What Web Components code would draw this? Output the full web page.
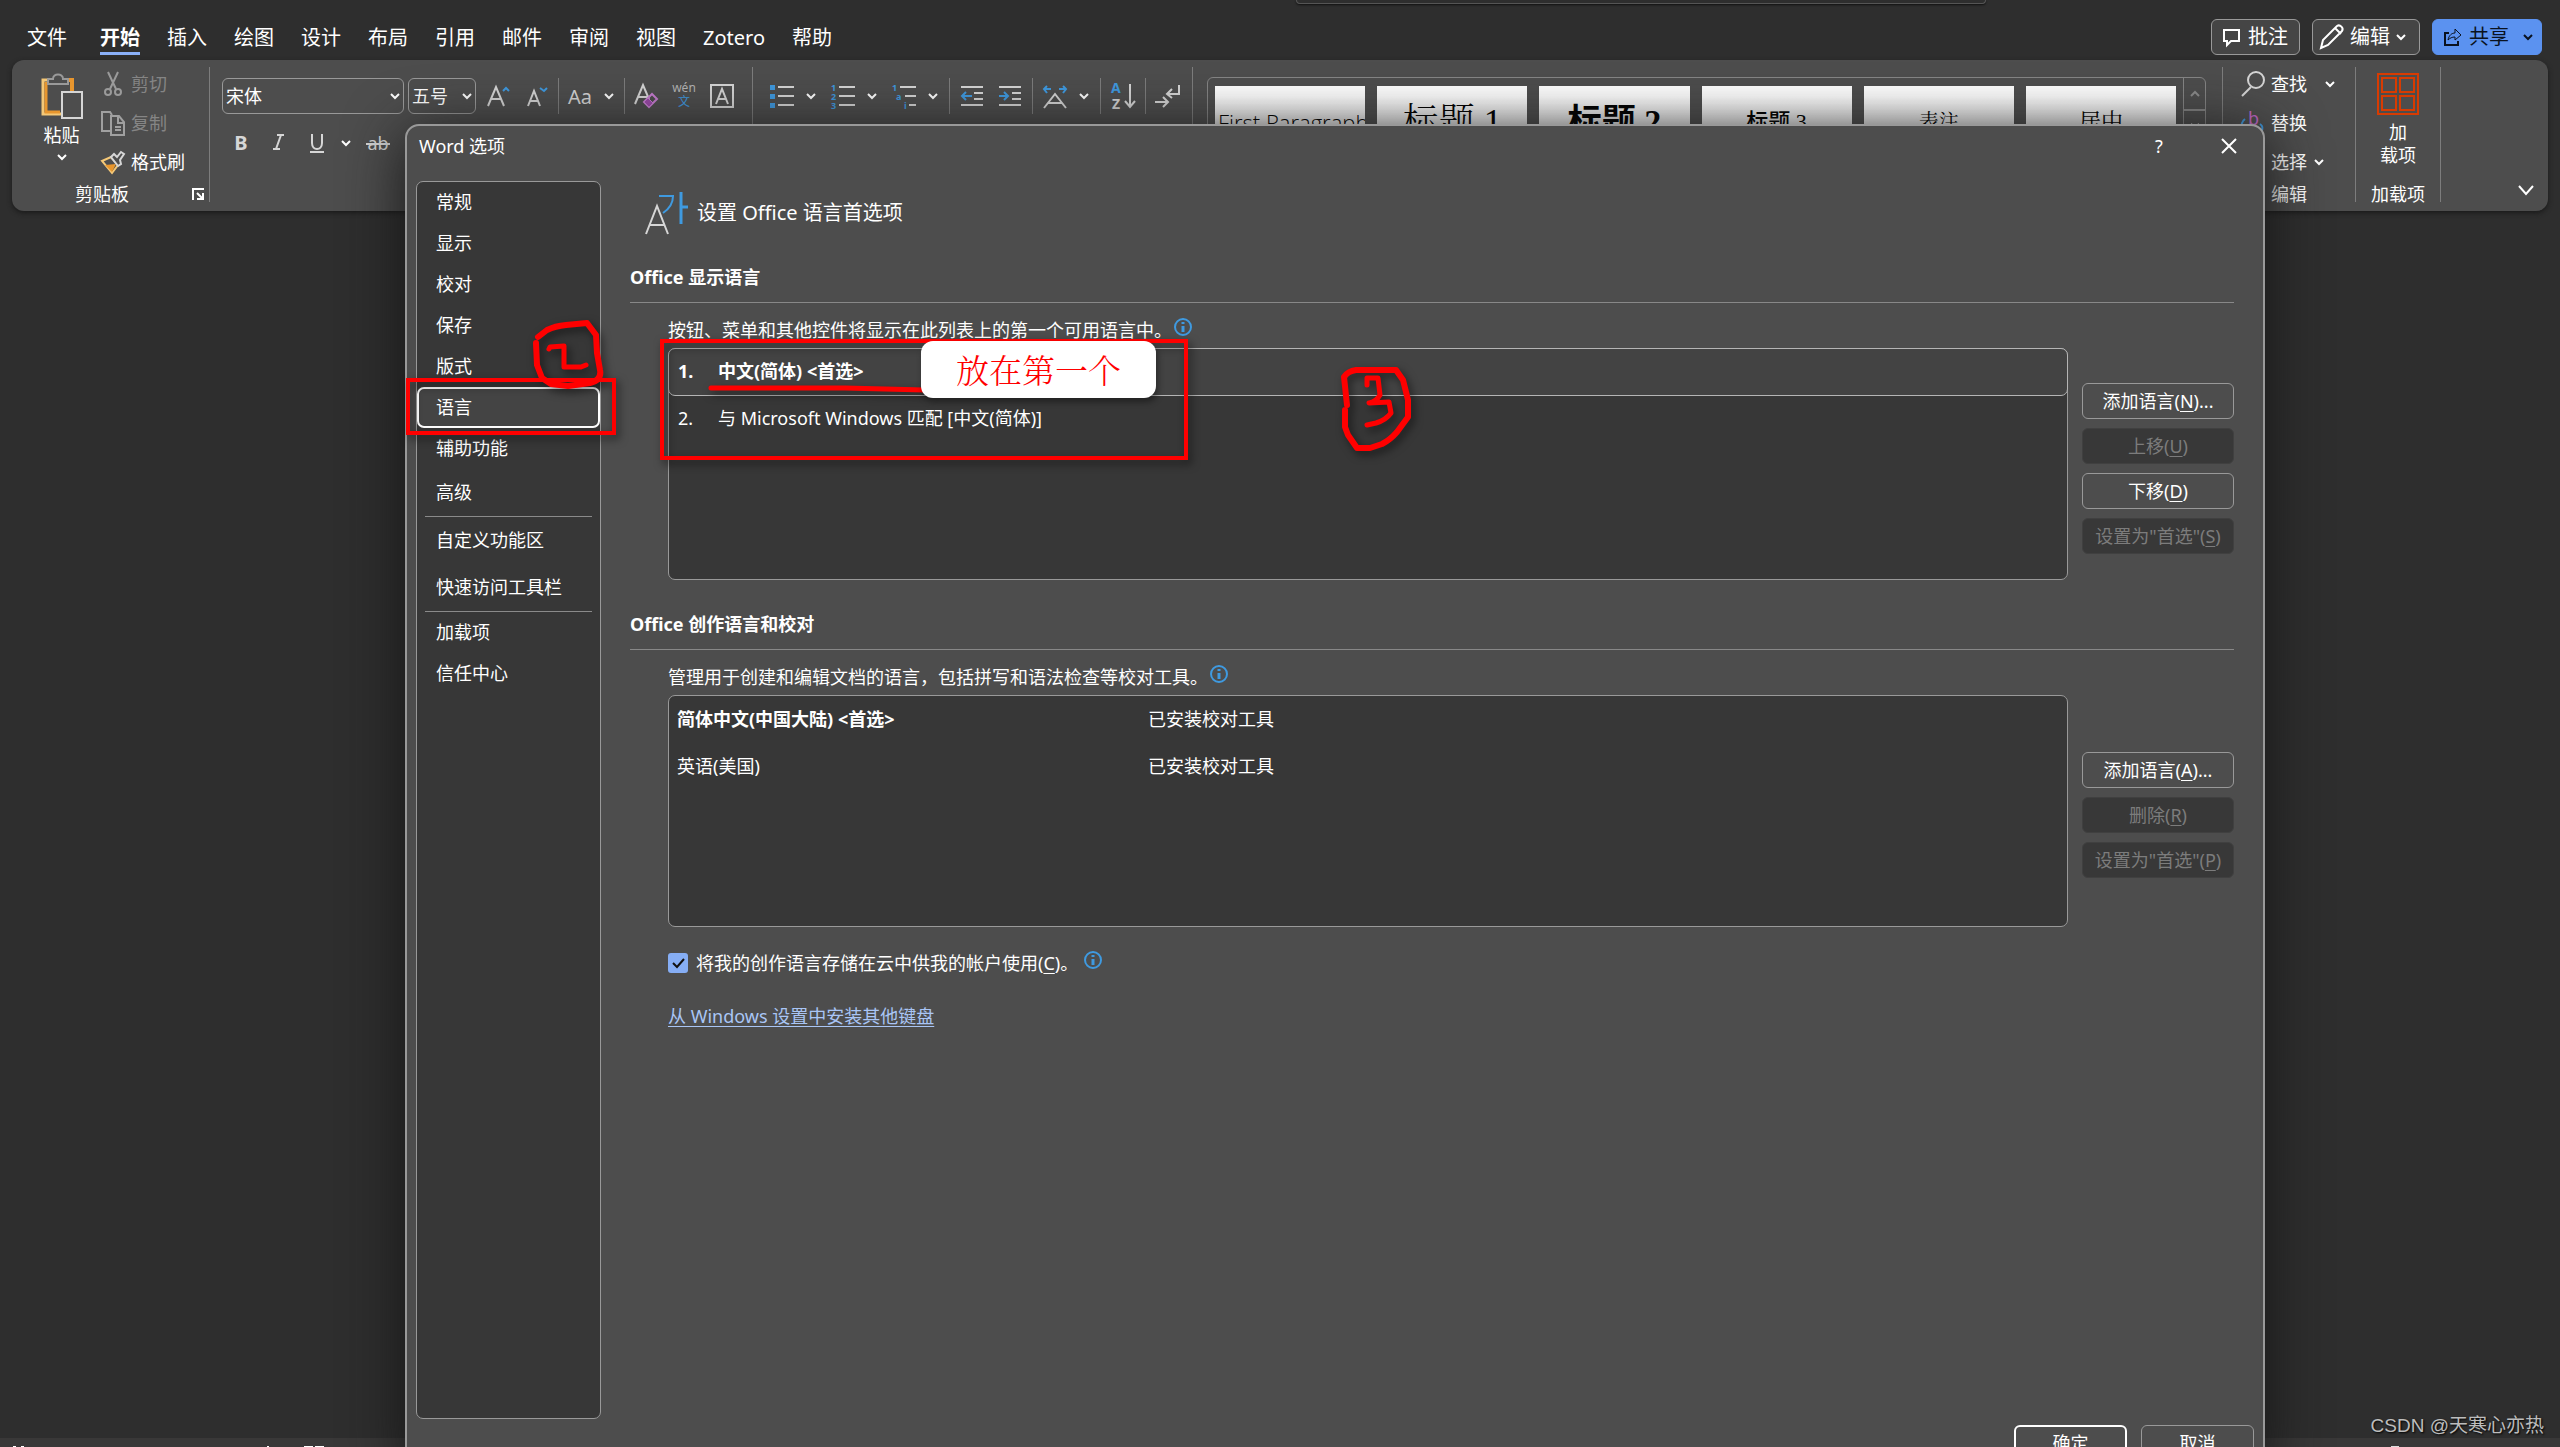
<!DOCTYPE html>
<html lang="zh-CN">
<head>
<meta charset="utf-8">
<title>Word 选项</title>
<style>
html,body{margin:0;height:100%;overflow:hidden;background:#2e2e2e}
body{font-family:"Noto Sans","Noto Sans CJK SC",sans-serif;font-size:18px;line-height:24px;color:#fff}
</style>
</head>
<body>
<word-app></word-app>
<script>
const BASE = `*{box-sizing:border-box}button,select,input{font:inherit;color:inherit;background:none;border:0;margin:0;padding:0}button{cursor:pointer}u{text-underline-offset:3px}`;
function define(tag, html, setup) {
  const t = document.createElement('template');
  t.innerHTML = html;
  customElements.define(tag, class extends HTMLElement {
    constructor() {
      super();
      this.attachShadow({mode: 'open'}).appendChild(t.content.cloneNode(true));
    }
    connectedCallback() { if (setup) setup(this, this.shadowRoot); }
  });
}

/* icon set: [width, height, markup] */
const W = '#d6d6d6', B = '#3f9ae0';
const chev = (c, s) => `<path d="M2 2l4 4 4-4" fill="none" stroke="${c}" stroke-width="${s}"/>`;
const ICONS = {
  chev: [12, 8, chev('#fff', 2)],
  chevDark: [12, 8, chev('#0a1220', 2)],
  chevDim: [12, 8, '<path d="M2 6l4-4 4 4" fill="none" stroke="#8b8b8b" stroke-width="2"/>'],
  chevBig: [18, 12, '<path d="M2 2l7 8 7-8" fill="none" stroke="#fff" stroke-width="2"/>'],
  paste: [42, 46, `<path d="M6 7H2v34h18" fill="none" stroke="#f5c877" stroke-width="3"/><path d="M5 9v30h14" fill="none" stroke="#e8962e" stroke-width="3"/><path d="M25 7h6v11" fill="none" stroke="#e8962e" stroke-width="4"/><path d="M7 11V6h5c0-6 10-6 10 0h5v5z" fill="#4d4d4d" stroke="#9a9a9a" stroke-width="2"/><rect x="21" y="19" width="20" height="26" fill="#4d4d4d" stroke="#d6d6d6" stroke-width="2"/>`],
  cut: [24, 26, `<g fill="none" stroke="#9a9a9a" stroke-width="2"><path d="M7 1l8 17M17 1L9 18"/><circle cx="7" cy="21" r="3"/><circle cx="17" cy="21" r="3"/></g>`],
  copy: [24, 26, `<g fill="none" stroke="#a0a0a0" stroke-width="2"><path d="M9 21H1V2h8l2 3"/><path d="M10 6h8l5 6v13H10z" fill="#4d4d4d"/><path d="M17 7v6h6M14 17h6M14 20h6"/></g>`],
  brush: [24, 24, `<path d="M1 11l9-4 7 8-6 8z" fill="#4d4d4d" stroke="#f5c877" stroke-width="2"/><path d="M4 15l11-1-4 8z" fill="#e8962e"/><path d="M10 7l3-3 3 3 4-5 3 2-4 6 1 4-3 2z" fill="#4d4d4d" stroke="${W}" stroke-width="2"/>`],
  launcher: [12, 12, `<path d="M1 12V1h11M5 5l6 6M11 5v6H5" fill="none" stroke="#fff" stroke-width="2"/>`],
  grow: [24, 24, `<path d="M1 22L9 3l8 19M4 15h10" fill="none" stroke="${W}" stroke-width="2"/><path d="M16 7l3-3 3 3" fill="none" stroke="${B}" stroke-width="2"/>`],
  shrink: [24, 24, `<path d="M3 22L9 7l6 15M5 17h8" fill="none" stroke="${W}" stroke-width="2"/><path d="M15 4l4 3 3-3" fill="none" stroke="${B}" stroke-width="2"/>`],
  aa: [24, 24, `<text x="0" y="20" font-size="20" fill="${W}">Aa</text>`],
  clear: [24, 26, `<path d="M1 21L9 2l6 14M4 14h9" fill="none" stroke="${W}" stroke-width="2"/><path d="M10 19l8-8 5 5-8 8z" fill="none" stroke="#c77dd1" stroke-width="2"/><path d="M10 19l4-4 5 5-4 4z" fill="#9b4aa8" stroke="#c77dd1"/>`],
  pinyin: [24, 26, `<text x="12" y="9" text-anchor="middle" font-size="12" fill="#b4b4b4">wén</text><text x="12" y="23" text-anchor="middle" font-size="12" fill="${B}">文</text>`],
  boxA: [24, 26, `<rect x="1" y="2" width="22" height="22" fill="none" stroke="${W}" stroke-width="2"/><path d="M6 21l6-15 6 15M8 16h8" fill="none" stroke="${W}" stroke-width="2"/>`],
  bullets: [24, 26, `<path d="M0 2h5v5H0zM0 11h5v5H0zM0 20h5v5H0z" fill="${B}"/><path d="M8 4h16M8 13h16M8 22h16" stroke="${W}" stroke-width="2"/>`],
  numbers: [24, 26, `<g font-size="9" font-weight="700" fill="${B}"><text x="0" y="8">1</text><text x="0" y="17">2</text><text x="0" y="26">3</text></g><path d="M8 4h16M8 13h16M8 22h16" stroke="${W}" stroke-width="2"/>`],
  multi: [24, 26, `<g font-size="9" font-weight="700" fill="${B}"><text x="0" y="8">1</text><text x="4" y="17">a</text><text x="12" y="26">i</text></g><path d="M8 4h16M13 13h11M17 22h7" stroke="${W}" stroke-width="2"/>`],
  outdent: [24, 26, `<path d="M1 4h22M14 10h9M14 16h9M1 22h22" stroke="${W}" stroke-width="2"/><path d="M12 13H3M6 9l-4 4 4 4" fill="none" stroke="${B}" stroke-width="2"/>`],
  indent: [24, 26, `<path d="M1 4h22M14 10h9M14 16h9M1 22h22" stroke="${W}" stroke-width="2"/><path d="M1 13h9M6 9l4 4-4 4" fill="none" stroke="${B}" stroke-width="2"/>`],
  cjkWidth: [24, 26, `<path d="M1 25l11-14 11 14M5 20h14" fill="none" stroke="${W}" stroke-width="2"/><path d="M8 6H1M4 3L1 6l3 4M16 6h7M20 3l3 3-3 4" fill="none" stroke="${B}" stroke-width="2"/>`],
  sort: [24, 28, `<text x="0" y="11" font-size="14" font-weight="700" fill="${B}">A</text><text x="1" y="27" font-size="14" font-weight="700" fill="${W}">Z</text><path d="M19 2v22M14 19l5 6 5-6" fill="none" stroke="${W}" stroke-width="2"/>`],
  marks: [26, 26, `<path d="M24 2v9H13M17 6l-5 5 5 4M0 19h12M8 14l5 5-5 5" fill="none" stroke="${W}" stroke-width="2"/>`],
  bold: [24, 26, `<text x="12" y="20" text-anchor="middle" font-size="20" font-weight="700" fill="${W}">B</text>`],
  italic: [24, 26, `<path d="M10 5h7M6 19h7M14 5l-5 14" fill="none" stroke="${W}" stroke-width="2"/>`],
  under: [24, 26, `<path d="M7 4v9c0 8 10 8 10 0V4M5 22h14" fill="none" stroke="${W}" stroke-width="2"/>`],
  strike: [24, 26, `<text x="12" y="20" text-anchor="middle" font-size="18" fill="${W}">ab</text><path d="M0 14h24" stroke="${W}" stroke-width="2"/>`],
  find: [24, 26, `<ellipse cx="15" cy="9" rx="8" ry="8" fill="none" stroke="${W}" stroke-width="2"/><path d="M10 16l-9 9" stroke="${W}" stroke-width="2"/>`],
  replace: [24, 26, `<text x="7" y="15" font-size="18" fill="#c468c9">b</text><path d="M4 9c-3 2-4 6-3 11M19 14c3 2 3 5 1 8" fill="none" stroke="${B}" stroke-width="2"/>`],
  blank: [24, 26, ''],
  addins: [42, 42, `<g fill="none" stroke="#d83b01" stroke-width="2"><rect x="1" y="1" width="40" height="40"/><rect x="5" y="5" width="14" height="14"/><rect x="23" y="5" width="14" height="14"/><rect x="5" y="23" width="14" height="14"/><rect x="23" y="23" width="14" height="14"/></g>`],
  comment: [18, 18, `<path d="M1 2h15v11H8l-4 4v-4H1z" fill="none" stroke="#fff" stroke-width="2"/>`],
  pencil: [26, 26, `<path d="M2 24l2-8L18 2c3-2 7 2 5 5L9 21zM16 4l6 6" fill="none" stroke="#fff" stroke-width="2"/>`],
  share: [18, 18, `<path d="M5 5H1v12h13v-4" fill="none" stroke="#0a1220" stroke-width="2"/><path d="M4 12c1-5 4-7 7-7V1l6 6-6 5V9c-3 0-5 1-7 3z" fill="none" stroke="#0a1220" stroke-width="1"/>`],
  info: [20, 20, `<circle cx="10" cy="9" r="8" fill="none" stroke="#3f9ae0" stroke-width="2"/><path d="M10 4v2M10 8v6" stroke="#3f9ae0" stroke-width="3"/>`],
  close: [16, 16, `<path d="M1 1l14 14M15 1L1 15" stroke="#fff" stroke-width="2"/>`],
  check: [20, 20, `<path d="M5 10l4 4 7-8" fill="none" stroke="#111" stroke-width="2"/>`],
  lang: [44, 44, `<path d="M1 43l11-28 11 28M5 34h14" fill="none" stroke="${W}" stroke-width="2"/><path d="M14 5h14c0 8-4 13-10 17" fill="none" stroke="${B}" stroke-width="2"/><path d="M36 1v32M36 16h7" stroke="${B}" stroke-width="3"/>`]
};
define('ui-icon', `<style>:host{display:inline-flex;flex:none}svg{display:block;overflow:visible;font-family:"Noto Sans","Noto Sans CJK SC",sans-serif}</style>`, (el, root) => {
  const icon = ICONS[el.getAttribute('name')];
  if (!icon || root.querySelector('svg')) return;
  const [w, h, m] = icon;
  root.innerHTML += `<svg width="${w}" height="${h}" viewBox="0 0 ${w} ${h}" aria-hidden="true">${m}</svg>`;
});

/* ---- title row ---- */
define('ribbon-tab', `<style>${BASE}:host{display:block}button{display:block;font-size:20px;line-height:28px;border-bottom:3px solid transparent}:host([active]) button{font-weight:700;border-color:#8ab0f8}</style><button role="tab"><slot></slot></button>`);
define('top-button', `<style>${BASE}:host{display:block}button{display:flex;align-items:center;height:36px;padding:0 11px;gap:7px;font-size:20px;line-height:28px;border:1px solid #999;border-radius:6px;background:#454545}:host([edit]) button{padding:0 12px 0 6px;gap:5px}:host([primary]) button{padding-right:7px;background:#5b92f0;border-color:#5b92f0;color:#0a1220}</style><button><slot name="icon"></slot><slot></slot><slot name="end"></slot></button>`);
define('word-header', `<style>${BASE}
:host{display:flex;height:60px;align-items:flex-start;justify-content:space-between;position:relative}
.tabs{display:flex;gap:27px;padding:24px 0 0 27px}.file{margin-right:6px}.right{display:flex;gap:12px;padding:19px 18px 0 0}
.search{position:absolute;top:0;left:calc(50% + 16px);width:690px;height:4px;border:1px solid #555;border-top:0;border-radius:0 0 5px 5px;box-shadow:0 1px 2px #111}
.wide{padding-left:6px}</style>
<div class="search"></div>
<nav class="tabs" role="tablist"><ribbon-tab class="file">文件</ribbon-tab><ribbon-tab active>开始</ribbon-tab><ribbon-tab>插入</ribbon-tab><ribbon-tab>绘图</ribbon-tab><ribbon-tab>设计</ribbon-tab><ribbon-tab>布局</ribbon-tab><ribbon-tab>引用</ribbon-tab><ribbon-tab>邮件</ribbon-tab><ribbon-tab>审阅</ribbon-tab><ribbon-tab>视图</ribbon-tab><ribbon-tab>Zotero</ribbon-tab><ribbon-tab>帮助</ribbon-tab></nav>
<div class="right">
<top-button><ui-icon slot="icon" name="comment"></ui-icon>批注</top-button>
<top-button edit><ui-icon slot="icon" name="pencil"></ui-icon>编辑<ui-icon slot="end" name="chev"></ui-icon></top-button>
<top-button primary><ui-icon slot="icon" name="share"></ui-icon>共享<ui-icon class="wide" slot="end" name="chevDark"></ui-icon></top-button>
</div>`);

/* ---- ribbon ---- */
define('tool-button', `<style>${BASE}:host{display:block}button{display:flex;align-items:center;justify-content:center;width:38px;height:36px}:host([split]) button{width:61px;gap:11px}.c{display:none}:host([split]) .c{display:flex}</style><button><ui-icon></ui-icon><ui-icon class="c" name="chev"></ui-icon></button>`, (el, root) => {
  const n = document.createElement('ui-icon'), b = root.querySelector('button');
  n.setAttribute('name', el.getAttribute('icon'));
  b.replaceChild(n, b.firstElementChild);
  b.setAttribute('aria-label', el.getAttribute('icon'));
});
define('tool-sep', `<style>:host{display:block;width:1px;height:36px;background:#7d7d7d;margin:0 var(--sep-gap,2px)}</style>`);
define('label-button', `<style>${BASE}:host{display:block}button{display:flex;align-items:center;gap:6px;height:34px;line-height:24px}:host([off]) button{color:#858585}</style><button><slot name="icon"></slot><slot></slot><slot name="end"></slot></button>`);
define('combo-box', `<style>${BASE}:host{box-sizing:border-box;display:grid;align-items:center;width:var(--w);height:36px;border:1px solid #999;border-radius:6px}select,ui-icon{grid-area:1/1}select{appearance:none;width:100%;height:34px;padding-left:3px;outline:0}ui-icon{justify-self:end;margin-right:2px;pointer-events:none}</style><select></select><ui-icon name="chev"></ui-icon>`, (el, root) => {
  const s = root.querySelector('select'); s.setAttribute('aria-label', el.getAttribute('label')); s.add(new Option(el.getAttribute('value')));
});
define('ribbon-group', `<style>${BASE}:host{display:flex;flex-direction:column;height:135px;border-right:1px solid #7d7d7d;flex:none}.body{height:112px;flex:none;margin-bottom:5px}.label{display:flex;align-items:center;line-height:20px;flex:none}.label span{flex:1;text-align:center}</style><div class="body"><slot></slot></div><div class="label"><span><slot name="label"></slot></span><slot name="launcher"></slot></div>`);
define('style-card', `<style>${BASE}:host{display:block;flex:1;min-width:0}button{display:flex;align-items:flex-start;width:100%;height:90px;overflow:hidden;white-space:nowrap;background:linear-gradient(#fff,#fff 10px,#ddd 50px);color:#000}span{flex:1;min-width:0;text-align:center;line-height:72px;font-family:"Liberation Serif","Noto Serif CJK SC","Noto Sans CJK SC",serif}
:host([kind=para]) span{font:300 22px/72px "Open Sans",sans-serif;text-align:left;padding-left:3px}:host([kind=h1]) span{font-size:36px;font-weight:300}:host([kind=h2]) span{font-size:34px;font-weight:700;font-family:"Liberation Serif","Noto Sans CJK SC",serif}:host([kind=h3]) span{font-size:22px;font-weight:500;font-family:"Liberation Serif","Noto Sans CJK SC",serif}:host([kind=cap]) span{font-size:20px}:host([kind=mid]) span{font-size:22px}</style><button><span><slot></slot></span></button>`);
define('style-gallery', `<style>${BASE}:host{display:flex;height:108px;border:1px solid #858585;border-radius:6px}.cards{flex:1;display:flex;gap:12px;padding:8px 7px}.nav{width:22px;border-left:1px solid #858585;display:flex;flex-direction:column}.nav button{height:31px;display:flex;align-items:center;justify-content:center}.nav button+button{border-top:2px solid #858585}</style><div class="cards"><slot></slot></div><div class="nav"><button aria-label="up"><ui-icon name="chevDim"></ui-icon></button><button aria-label="down"><ui-icon name="chev"></ui-icon></button></div>`);
define('word-ribbon', `<style>${BASE}
:host{display:flex;height:144px;margin:0 12px;padding-top:7px;background:#4d4d4d;border-radius:12px;box-shadow:0 2px 5px #1a1a1a;line-height:24px}
.row{display:flex;align-items:center}.clip{display:flex;padding-left:19px;width:197px;gap:9px}
.paste{display:flex;flex-direction:column;align-items:center;width:61px;padding-top:6px;line-height:24px}.paste span{margin:4px 0 6px}
.col{display:flex;flex-direction:column;gap:5px}
.font{--sep-gap:2px;width:543px}.font .row:first-child{padding:11px 0 0 12px}.font combo-box{margin-right:4px}
.font .second{padding:11px 0 0 12px}
.para{--sep-gap:3px;width:440px}.para .row{padding:11px 0 0 10px}
.styles{flex:1}.gal{padding:10px 16px 0 14px}
.edit{width:133px}.edit .col{padding-left:18px}
.add{width:85px}.add button{display:flex;flex-direction:column;align-items:center;width:100%;padding-top:6px;gap:6px;line-height:23px}
.tail{width:107px;display:flex;align-items:flex-end;justify-content:flex-end;padding:0 13px 15px 0}
[slot=launcher]{margin-right:5px}.far{padding-left:11px}</style>
<ribbon-group><div class="clip"><button class="paste"><ui-icon name="paste"></ui-icon><span>粘贴</span><ui-icon name="chev"></ui-icon></button>
<div class="col"><label-button off><ui-icon slot="icon" name="cut"></ui-icon>剪切</label-button><label-button off><ui-icon slot="icon" name="copy"></ui-icon>复制</label-button><label-button><ui-icon slot="icon" name="brush"></ui-icon>格式刷</label-button></div></div>
<span slot="label">剪贴板</span><ui-icon slot="launcher" name="launcher"></ui-icon></ribbon-group>
<ribbon-group class="font"><div class="row"><combo-box style="--w:182px" label="字体" value="宋体"></combo-box><combo-box style="--w:68px" label="字号" value="五号"></combo-box>
<tool-button icon="grow"></tool-button><tool-button icon="shrink"></tool-button><tool-sep></tool-sep><tool-button split icon="aa"></tool-button><tool-sep></tool-sep><tool-button icon="clear"></tool-button><tool-button icon="pinyin"></tool-button><tool-button icon="boxA"></tool-button></div>
<div class="row second"><tool-button icon="bold"></tool-button><tool-button icon="italic"></tool-button><tool-button split icon="under"></tool-button><tool-button icon="strike"></tool-button></div></ribbon-group>
<ribbon-group class="para"><div class="row"><tool-button split icon="bullets"></tool-button><tool-button split icon="numbers"></tool-button><tool-button split icon="multi"></tool-button><tool-sep></tool-sep><tool-button icon="outdent"></tool-button><tool-button icon="indent"></tool-button><tool-sep></tool-sep><tool-button split icon="cjkWidth"></tool-button><tool-sep></tool-sep><tool-button icon="sort"></tool-button><tool-sep></tool-sep><tool-button icon="marks"></tool-button></div></ribbon-group>
<ribbon-group class="styles"><div class="gal"><style-gallery><style-card kind="para">First Paragraph</style-card><style-card kind="h1">标题 1</style-card><style-card kind="h2">标题 2</style-card><style-card kind="h3">标题 3</style-card><style-card kind="cap">表注</style-card><style-card kind="mid">居中</style-card></style-gallery></div></ribbon-group>
<ribbon-group class="edit"><div class="col"><label-button><ui-icon slot="icon" name="find"></ui-icon>查找<ui-icon class="far" slot="end" name="chev"></ui-icon></label-button><label-button><ui-icon slot="icon" name="replace"></ui-icon>替换</label-button><label-button><ui-icon slot="icon" name="blank"></ui-icon>选择<ui-icon slot="end" name="chev"></ui-icon></label-button></div><span slot="label">编辑</span></ribbon-group>
<ribbon-group class="add"><button><ui-icon name="addins"></ui-icon><span>加<br>载项</span></button><span slot="label">加载项</span></ribbon-group>
<div class="tail"><ui-icon name="chevBig"></ui-icon></div>`);

/* ---- options dialog ---- */
define('nav-item', `<style>${BASE}:host{display:block}button{display:block;width:100%;height:41px;padding:0 0 2px 19px;text-align:left;border:2px solid transparent;border-width:2px 0}:host([edge]) button{height:47px}:host([selected]) button{border:2px solid #fff;border-radius:7px;background:#444;padding-left:17px}</style><button><slot></slot></button>`);
define('options-nav', `<style>${BASE}:host{display:block;width:185px;flex:none;border:1px solid #999;border-radius:7px;background:#373737}hr{height:1px;border:0;background:#8a8a8a;margin:0 8px}</style>
<nav-item>常规</nav-item><nav-item>显示</nav-item><nav-item>校对</nav-item><nav-item>保存</nav-item><nav-item>版式</nav-item><nav-item selected>语言</nav-item><nav-item>辅助功能</nav-item><nav-item edge>高级</nav-item><hr><nav-item edge>自定义功能区</nav-item><nav-item edge>快速访问工具栏</nav-item><hr><nav-item>加载项</nav-item><nav-item>信任中心</nav-item>`);
define('dialog-button', `<style>${BASE}:host{display:block}button{display:block;width:100%;height:36px;border:1px solid #999;border-radius:6px;white-space:nowrap;line-height:24px}button:disabled{background:#383838;border-color:#404040;color:#7c7c7c}:host([default]) button{border:2px solid #fff}</style><button><slot></slot></button>`, (el, root) => { root.querySelector('button').disabled = el.hasAttribute('disabled'); });
define('option-section', `<style>${BASE}:host{display:block;margin-top:31px}h2{margin:0;font-size:18px;line-height:26px;padding-bottom:12px;border-bottom:1px solid #888}.in{padding-left:38px}.desc{display:flex;align-items:flex-start;gap:1px;padding:15px 0 6px}.main{display:flex;gap:14px;align-items:center}.list{flex:1;height:232px;border:1px solid #999;border-radius:7px;background:#373737}.btns{width:152px;display:flex;flex-direction:column;gap:9px;padding-top:8px}</style>
<h2><slot name="title"></slot></h2><div class="in"><div class="desc"><span><slot name="desc"></slot></span><ui-icon name="info"></ui-icon></div><div class="main"><div class="list"><slot name="list"></slot></div><div class="btns"><slot name="button"></slot></div></div><slot></slot></div>`);
define('display-languages', `<style>${BASE}:host{display:block}ol{margin:-1px;padding:0;list-style:none}li{display:flex;height:47px;line-height:46px;padding-left:10px}li span{width:40px}.sel{height:48px;margin-bottom:-1px;line-height:44px;font-weight:700;background:#434343;border:1px solid #b5b5b5;border-radius:7px;padding-left:9px}</style><ol role="listbox"><li class="sel" role="option"><span>1.</span>中文(简体) &lt;首选&gt;</li><li role="option"><span>2.</span>与 Microsoft Windows 匹配 [中文(简体)]</li></ol>`);
define('authoring-languages', `<style>${BASE}:host{display:block}table{width:100%;border-collapse:collapse;table-layout:fixed}td{height:47px;padding:0 0 2px 8px;text-align:left}td:first-child{width:471px}.sel td:first-child{font-weight:700}</style><table><tr class="sel"><td>简体中文(中国大陆) &lt;首选&gt;</td><td>已安装校对工具</td></tr><tr><td>英语(美国)</td><td>已安装校对工具</td></tr></table>`);
define('options-dialog', `<style>${BASE}
:host{display:flex;flex-direction:column;position:absolute;left:405px;right:295px;top:124px;bottom:-26px;background:#4d4d4d;border:2px solid #999;border-radius:14px;box-shadow:0 10px 60px #161616}
header{display:flex;align-items:center;height:40px;padding:0 26px 0 12px;margin-bottom:15px}header span{flex:1}header button{width:16px;height:24px;display:flex;align-items:center;justify-content:center}header button+button{margin-left:54px}
.body{flex:1;display:flex;padding-left:9px;gap:29px}main{flex:1;padding:12px 29px 0 0}
.head{display:flex;align-items:center;gap:8px;height:40px;padding-left:15px;font-size:20px;line-height:28px}
.store{display:flex;align-items:flex-start;margin-top:24px}.store label{display:flex;align-items:center;gap:8px;margin-right:5px}.box{display:grid;width:20px;height:20px}.box>*{grid-area:1/1}.box input{appearance:none;background:#86aef5;border-radius:3px;width:20px;height:20px}.box ui-icon{pointer-events:none}
a{display:table;margin-top:29px;color:#a9c5f5;text-decoration:underline;text-underline-offset:3px}
footer{display:flex;justify-content:flex-end;gap:14px;padding:6px 9px 10px 0}footer dialog-button{width:113px}</style>
<header><span>Word 选项</span><button>?</button><button aria-label="关闭"><ui-icon name="close"></ui-icon></button></header>
<div class="body"><options-nav></options-nav><main>
<div class="head"><ui-icon name="lang"></ui-icon><span>设置 Office 语言首选项</span></div>
<option-section><span slot="title">Office 显示语言</span><span slot="desc">按钮、菜单和其他控件将显示在此列表上的第一个可用语言中。</span><display-languages slot="list"></display-languages>
<dialog-button slot="button">添加语言(<u>N</u>)...</dialog-button><dialog-button slot="button" disabled>上移(<u>U</u>)</dialog-button><dialog-button slot="button">下移(<u>D</u>)</dialog-button><dialog-button slot="button" disabled>设置为"首选"(<u>S</u>)</dialog-button></option-section>
<option-section><span slot="title">Office 创作语言和校对</span><span slot="desc">管理用于创建和编辑文档的语言，包括拼写和语法检查等校对工具。</span><authoring-languages slot="list"></authoring-languages>
<dialog-button slot="button">添加语言(<u>A</u>)...</dialog-button><dialog-button slot="button" disabled>删除(<u>R</u>)</dialog-button><dialog-button slot="button" disabled>设置为"首选"(<u>P</u>)</dialog-button>
<div class="store"><label for="cloud"><span class="box"><input type="checkbox" id="cloud" checked><ui-icon name="check"></ui-icon></span><span>将我的创作语言存储在云中供我的帐户使用(<u>C</u>)。</span></label><ui-icon name="info"></ui-icon></div>
<a href="#keyboards">从 Windows 设置中安装其他键盘</a></option-section>
</main></div>
<footer><dialog-button default>确定</dialog-button><dialog-button>取消</dialog-button></footer>`);

/* ---- red pen notes ---- */
define('pen-notes', `<style>:host{position:absolute;inset:0;pointer-events:none}svg{position:absolute;left:0;top:0;filter:drop-shadow(3px 4px 4px #0008)}p{position:absolute;left:921px;top:341px;width:235px;height:57px;margin:0;border-radius:12px;background:#fff;color:#f00;font:300 33px/62px "Liberation Serif","Noto Serif CJK SC","Noto Sans CJK SC",serif;text-align:center;box-shadow:2px 4px 6px #0006}</style>
<svg width="1420" height="480" fill="none" stroke="#f00" stroke-linecap="round" stroke-linejoin="round">
<g stroke-width="4" stroke-linejoin="miter"><rect x="408" y="380" width="206" height="53"/><rect x="662" y="341" width="524" height="117"/></g>
<path stroke-width="5" d="M711 388H845L925 390"/>
<g stroke-width="6"><path d="M538 337L547 330Q555 326 566 325L587 323 596 335 597 353 600 370Q602 380 590 383L568 386 551 384 542 378 537 365 536 343"/><path stroke-width="5" d="M549 349L550 347 564 346V367L581 367 586 365"/>
<path d="M1347 405L1344 377Q1348 371 1356 370H1396L1403 380 1408 400V417L1397 432Q1390 440 1382 444L1370 448H1357L1348 435 1345 427V410"/><path stroke-width="5" d="M1367 385V378H1378L1380 395Q1376 402 1369 403L1389 402 1391 413Q1386 420 1376 423L1367 425"/></g></svg>
<p>放在第一个</p>`);
define('word-app', `<style>
:host{display:block;position:relative;height:100vh;overflow:hidden}
.status{position:absolute;left:0;right:0;bottom:0;height:9px;background:#393838;display:flex;justify-content:space-between}
.status svg{display:block}
.mark{position:absolute;right:16px;bottom:7px;font-size:19px;line-height:28px;color:#bdbdbd;text-shadow:1px 1px 2px #000;font-family:"Liberation Sans","Noto Sans CJK SC",sans-serif}</style>
<word-header></word-header><word-ribbon></word-ribbon>
<div class="status"><svg width="330" height="9" fill="#fff"><path d="M13 8h3v1h-3zM21 8h3v1h-3zM267 8h2v1h-2zM304 8h9v1h-9zM315 8h9v1h-9z"/></svg><svg width="170" height="9"><path d="M1 8h8v1H1z" fill="#ddd"/></svg></div>
<options-dialog></options-dialog><pen-notes></pen-notes><div class="mark">CSDN @天寒心亦热</div>`);
</script>
</body>
</html>
